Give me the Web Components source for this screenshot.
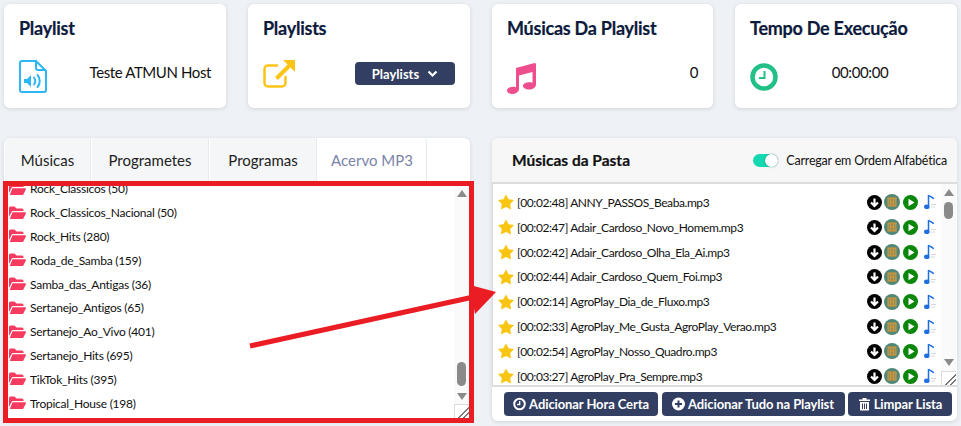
<!DOCTYPE html>
<html lang="pt">
<head>
<meta charset="utf-8">
<title>Playlist</title>
<style>
  html, body { margin: 0; height: 100%; }
  body { background: #eef1f5; font-family: Lato, "Noto Sans", sans-serif; overflow: hidden; }
</style>
</head>
<body>
<app-page>
  <stat-card slot="cards" heading="Playlist" place="end">
    <svg slot="icon" width="28" height="33" viewBox="0 0 28 33"><path d="M1 3a2 2 0 0 1 2-2h14l10 10v19a2 2 0 0 1-2 2H3a2 2 0 0 1-2-2z" fill="none" stroke="#2eb7f7" stroke-width="2"/><path d="M17 1v7a2 2 0 0 0 2 2h8" fill="none" stroke="#2eb7f7" stroke-width="2"/><path d="M5 19h3l4-4v12l-4-4H5z" fill="#2eb7f7"/><path d="M15 17.500c1.500 2 1.500 5 0 7M18.500 15c3 3.500 3 8.500 0 12" fill="none" stroke="#2eb7f7" stroke-width="2" stroke-linecap="round"/></svg>
    Teste ATMUN Host
  </stat-card>
  <stat-card slot="cards" heading="Playlists" place="end">
    <svg slot="icon" width="33" height="28" viewBox="0 0 33 28"><path d="M14 5.500H5a3.500 3.500 0 0 0-3.500 3.500v14A3.500 3.500 0 0 0 5 26.500h14a3.500 3.500 0 0 0 3.500-3.500v-6" fill="none" stroke="#fcc419" stroke-width="2.500" stroke-linecap="round"/><path d="M20 0h12v12z" fill="#fcc419"/><path d="M26.500 5.500 13.500 18.500" stroke="#fcc419" stroke-width="4"/></svg>
    <drop-button>Playlists</drop-button>
  </stat-card>
  <stat-card slot="cards" heading="Músicas Da Playlist" place="end">
    <svg slot="icon" width="29" height="31" viewBox="0 0 29 31" style="margin-top:3px"><path d="M9 5 27.500 0c.8 0 1.500.6 1.500 1.500v20c0 2.800-3 5-6.500 5s-6.500-1.600-6.500-3.600 3-3.600 6.500-3.600c1 0 2 .1 3 .4V9L12 12.500V26c0 2.800-3.500 5-6.500 5S0 29.400 0 27.400s3-3.700 6-3.700c1 0 2 .1 3 .5V6.500z" fill="#ef4e8e"/></svg>
    0
  </stat-card>
  <stat-card slot="cards" heading="Tempo De Execução" place="center">
    <svg slot="icon" width="28" height="28" viewBox="0 0 28 28" style="margin-top:3px"><circle cx="14" cy="14" r="11.500" fill="none" stroke="#22c087" stroke-width="4.500"/><path d="M14.500 8v7H9" fill="none" stroke="#22c087" stroke-width="2"/></svg>
    00:00:00
  </stat-card>

  <folder-panel slot="left">
    <folder-row>Rock_Classicos (50)</folder-row>
    <folder-row>Rock_Classicos_Nacional (50)</folder-row>
    <folder-row>Rock_Hits (280)</folder-row>
    <folder-row>Roda_de_Samba (159)</folder-row>
    <folder-row>Samba_das_Antigas (36)</folder-row>
    <folder-row>Sertanejo_Antigos (65)</folder-row>
    <folder-row>Sertanejo_Ao_Vivo (401)</folder-row>
    <folder-row>Sertanejo_Hits (695)</folder-row>
    <folder-row>TikTok_Hits (395)</folder-row>
    <folder-row>Tropical_House (198)</folder-row>
  </folder-panel>

  <songs-panel slot="right">
    <song-row>[00:02:48] ANNY_PASSOS_Beaba.mp3</song-row>
    <song-row>[00:02:47] Adair_Cardoso_Novo_Homem.mp3</song-row>
    <song-row>[00:02:42] Adair_Cardoso_Olha_Ela_Ai.mp3</song-row>
    <song-row>[00:02:44] Adair_Cardoso_Quem_Foi.mp3</song-row>
    <song-row>[00:02:14] AgroPlay_Dia_de_Fluxo.mp3</song-row>
    <song-row>[00:02:33] AgroPlay_Me_Gusta_AgroPlay_Verao.mp3</song-row>
    <song-row>[00:02:54] AgroPlay_Nosso_Quadro.mp3</song-row>
    <song-row>[00:03:27] AgroPlay_Pra_Sempre.mp3</song-row>
    <action-button slot="actions" icon="clock">Adicionar Hora Certa</action-button>
    <action-button slot="actions" icon="plus">Adicionar Tudo na Playlist</action-button>
    <action-button slot="actions" icon="trash">Limpar Lista</action-button>
  </songs-panel>

  <red-callout slot="overlay"></red-callout>
</app-page>

<script>
const scrollbarParts = `
  <span class="up"></span>
  <span class="thumb"></span>
  <span class="down"></span>
`;
const scrollbarCss = `
  .bar { display: flex; flex-direction: column; align-items: center; width: 15px; flex: none; background: #fafafa; }
  .up, .down { flex: none; width: 0; height: 0; border-style: solid; border-color: transparent; border-width: 0 5px 7px; border-bottom-color: #8a8a8a; }
  .down { transform: rotate(180deg); }
  .thumb { width: 9px; background: #8a8a8a; border-radius: 5px; }
  .grip { width: 15px; height: 14px; flex: none; background: #fff; border: 1px solid #dcdcdc; border-width: 1px 0 0 1px; box-sizing: border-box;
    background-image: linear-gradient(135deg, transparent 58%, #777 58%, #777 64%, transparent 64%, transparent 76%, #777 76%, #777 82%, transparent 82%); }
`;

class AppPage extends HTMLElement {
  constructor() {
    super();
    this.attachShadow({ mode: "open" }).innerHTML = `
      <style>
        :host { display: block; position: relative; width: 961px; height: 426px; box-sizing: border-box; padding: 4px; }
        .cards { display: grid; grid-template-columns: 222px 222px 221px 222px; column-gap: 22px; height: 104px; margin-bottom: 30px; }
        .panels { display: grid; grid-template-columns: 466px 465px; column-gap: 22px; height: 283px; }
      </style>
      <div class="cards"><slot name="cards"></slot></div>
      <div class="panels"><slot name="left"></slot><slot name="right"></slot></div>
      <slot name="overlay"></slot>
    `;
  }
}

class StatCard extends HTMLElement {
  constructor() {
    super();
    const place = this.getAttribute("place") == "center" ? "center" : "flex-end";
    this.attachShadow({ mode: "open" }).innerHTML = `
      <style>
        :host { display: block; background: #fff; border-radius: 6px; box-shadow: 0 1px 4px rgba(60,70,90,.16); padding: 0 15px; color: #111; font-size: 15px; letter-spacing: -.4px; }
        h3 { margin: 0; padding-top: 12px; height: 34px; font-size: 18px; line-height: 24px; font-weight: 700; letter-spacing: -.25px; -webkit-text-stroke: .2px #0c1a3c; color: #0c1a3c; }
        .row { display: flex; align-items: flex-start; height: 40px; margin-top: 10px; }
        .icon { flex: none; display: flex; }
        .value { flex: 1; display: flex; justify-content: ${place}; align-items: center; height: 24px; }
        ::slotted(svg) { display: block; }
      </style>
      <h3>${this.getAttribute("heading")}</h3>
      <div class="row">
        <div class="icon"><slot name="icon"></slot></div>
        <div class="value"><slot></slot></div>
      </div>
    `;
  }
}

class DropButton extends HTMLElement {
  constructor() {
    super();
    this.attachShadow({ mode: "open" }).innerHTML = `
      <style>
        :host { display: flex; align-items: center; justify-content: center; gap: 8px; width: 100px; height: 23px; margin-top: 3px; background: #323f62; color: #fff; border-radius: 4px; font-size: 13px; font-weight: 700; letter-spacing: 0; }
      </style>
      <slot></slot>
      <svg width="11" height="8" viewBox="0 0 11 8"><path d="M1.500 1.500 5.500 5.500 9.500 1.500" fill="none" stroke="#fff" stroke-width="2.200"/></svg>
    `;
  }
}

class FolderPanel extends HTMLElement {
  constructor() {
    super();
    const tabs = ["Músicas", "Programetes", "Programas", "Acervo MP3"];
    this.attachShadow({ mode: "open" }).innerHTML = `
      <style>
        :host { display: flex; flex-direction: column; background: #fff; border-radius: 6px; box-shadow: 0 1px 4px rgba(60,70,90,.16); overflow: hidden; }
        .tabs { display: flex; height: 43px; flex: none; padding-left: 1px; gap: 1px; }
        .tab { display: flex; align-items: center; justify-content: center; background: #f5f6f8; border-right: 1px solid #e8eaee; font-size: 15px; color: #222; box-sizing: border-box; }
        .tab.on { background: #fff; color: #7b83a8; border-radius: 0 4px 0 0; }
        .body { flex: 1; display: flex; min-height: 0; padding: 5px 0 3px 0; }
        .list { flex: 1; overflow: hidden; padding-left: 5px; }
        .list-in { margin-top: -9px; }
        .side { display: flex; flex-direction: column; margin-right: 1px; }
        ${scrollbarCss}
        .bar { flex: 1; padding: 4px 0; box-sizing: border-box; min-height: 0; }
        .thumb { margin-top: auto; height: 24px; margin-bottom: 7px; }
      </style>
      <div class="tabs">
        ${tabs.map((t, i) => `<div class="tab ${i == 3 ? "on" : ""}" style="width:${[86, 117, 107, 109][i]}px">${t}</div>`).join("")}
      </div>
      <div class="body">
        <div class="list"><div class="list-in"><slot></slot></div></div>
        <div class="side"><div class="bar">${scrollbarParts}</div><div class="grip"></div></div>
      </div>
    `;
  }
}

class FolderRow extends HTMLElement {
  constructor() {
    super();
    this.attachShadow({ mode: "open" }).innerHTML = `
      <style>
        :host { display: flex; align-items: center; gap: 4px; height: 23.800px; font-size: 12px; letter-spacing: -.25px; color: #111; }
        svg { flex: none; }
      </style>
      <svg width="17" height="14" viewBox="0 0 17 14"><path d="M0 2a1.500 1.500 0 0 1 1.500-1.500h4L7.500 2.500H13A1.500 1.500 0 0 1 14.500 4v1H4.500c-1 0-1.700.5-2.100 1.300L0 11z" fill="#f73a60"/><path d="M3.500 6.200h12.700c.6 0 1 .6.700 1.200l-2.600 5c-.2.400-.7.600-1.200.6H0.800z" fill="#f73a60"/></svg>
      <slot></slot>
    `;
  }
}

class SongsPanel extends HTMLElement {
  constructor() {
    super();
    this.attachShadow({ mode: "open" }).innerHTML = `
      <style>
        :host { display: flex; flex-direction: column; background: #fff; border-radius: 6px; box-shadow: 0 1px 4px rgba(60,70,90,.16); overflow: hidden; }
        header { flex: none; display: flex; align-items: center; justify-content: space-between; height: 46px; box-sizing: border-box; padding: 0 10px 0 20px; background: #f7f7f8; border-bottom: 2px solid #dcdcdc; }
        h4 { margin: 0; font-size: 15.500px; font-weight: 700; -webkit-text-stroke: .2px #111; color: #111; }
        .toggle { display: flex; align-items: center; gap: 8px; font-size: 12.500px; letter-spacing: -.2px; color: #111; }
        .track { position: relative; width: 25px; height: 13px; border-radius: 7px; background: #14d8b0; }
        .knob { position: absolute; right: 0; top: 0; width: 13px; height: 13px; border-radius: 50%; background: #fff; box-shadow: 0 0 2px rgba(0,0,0,.4); }
        .body { height: 203px; flex: none; display: flex; border-left: 1px solid #dcdcdc; border-bottom: 2px solid #dcdcdc; box-sizing: border-box; }
        .list { flex: 1; overflow: hidden; padding: 6px 0 0 5px; }
        .side { display: flex; flex-direction: column; margin-right: 1px; }
        ${scrollbarCss}
        .bar { flex: 1; padding-top: 5px; }
        .thumb { height: 17px; margin-top: 6px; margin-bottom: auto; }
        .down { margin-bottom: 5px; }
        .actions { flex: 1; display: grid; grid-template-columns: 154px 183px 104px; column-gap: 3.500px; align-items: start; padding: 5px 0 0 12px; }
      </style>
      <header>
        <h4>Músicas da Pasta</h4>
        <label class="toggle"><span class="track"><span class="knob"></span></span>Carregar em Ordem Alfabética</label>
      </header>
      <div class="body">
        <div class="list"><slot></slot></div>
        <div class="side"><div class="bar">${scrollbarParts}</div><div class="grip"></div></div>
      </div>
      <div class="actions"><slot name="actions"></slot></div>
    `;
  }
}

class SongRow extends HTMLElement {
  constructor() {
    super();
    this.attachShadow({ mode: "open" }).innerHTML = `
      <style>
        :host { display: flex; align-items: center; height: 24.850px; font-size: 12px; letter-spacing: -.42px; color: #111; }
        .star { flex: none; margin-right: 3px; }
        .name { flex: 1; white-space: nowrap; }
        .tools { display: flex; align-items: center; flex: none; margin-right: 5px; }
        svg { display: block; }
      </style>
      <svg class="star" width="16" height="16" viewBox="0 0 16 15"><path d="M8 0l2.600 4.700 5.400.9-3.800 3.800.9 5.600L8 12.500l-5.100 2.500.9-5.600L0 5.600l5.400-.9z" fill="#f8c612"/></svg>
      <span class="name"><slot></slot></span>
      <span class="tools">
        <svg width="15" height="15" viewBox="0 0 15 15"><circle cx="7.500" cy="7.500" r="7.500" fill="#000"/><path d="M7.500 3.500v7M4 7.500l3.500 3.500L11 7.500" fill="none" stroke="#fff" stroke-width="2.200"/></svg>
        <svg style="margin-left:2px" width="16" height="16" viewBox="0 0 16 16"><circle cx="8" cy="8" r="8" fill="#4f8778"/><rect x="4" y="4" width="8" height="8" fill="#8a9160" stroke="#e8952c"/><path d="M6.500 4.500v7M9.500 4.500v7M6.500 8h3" stroke="#e8952c" stroke-width=".8"/></svg>
        <svg style="margin-left:3px" width="15" height="15" viewBox="0 0 15 15"><circle cx="7.500" cy="7.500" r="7.500" fill="#0a870a"/><path d="M5.500 3.800v7.400l6-3.700z" fill="#fff"/></svg>
        <svg style="margin-left:6px" width="12" height="16" viewBox="0 0 12 16"><path d="M4.500 1V12" stroke="#1e6fe0" stroke-width="1.500"/><ellipse cx="2.800" cy="12.800" rx="2.800" ry="2.300" fill="#1e6fe0"/><path d="M4.500 1c1 2 4.500 1.500 5 4" fill="none" stroke="#1e6fe0" stroke-width="1.500"/><path d="M7 10.500h5M7 13h4" stroke="#d8d8d8"/></svg>
      </span>
    `;
  }
}

const buttonIcons = {
  clock: `<circle cx="6.500" cy="7" r="5.300" fill="none" stroke="#fff" stroke-width="2"/><path d="M6.700 4v3.500H4" fill="none" stroke="#fff" stroke-width="1.300"/>`,
  plus: `<circle cx="6.500" cy="7" r="6.500" fill="#fff"/><path d="M6.500 3.500v7M3 7h7" stroke="#323f62" stroke-width="2"/>`,
  trash: `<path d="M1 2.500h11v1.500H1zM4.500 2.500V1h4v1.500M2 5h9v8.500H2z" fill="#fff"/><path d="M4.500 6.500v5.500M6.500 6.500v5.500M8.500 6.500v5.500" stroke="#323f62"/>`,
};

class ActionButton extends HTMLElement {
  constructor() {
    super();
    this.attachShadow({ mode: "open" }).innerHTML = `
      <style>
        :host { display: flex; align-items: center; justify-content: center; gap: 3px; height: 24px; background: #323f62; color: #fff; border-radius: 4px; font-size: 13px; font-weight: 700; letter-spacing: -.1px; white-space: nowrap; }
      </style>
      <svg width="13" height="14" viewBox="0 0 13 14">${buttonIcons[this.getAttribute("icon")]}</svg>
      <slot></slot>
    `;
  }
}

// marcacao vermelha por cima do print
class RedCallout extends HTMLElement {
  constructor() {
    super();
    this.attachShadow({ mode: "open" }).innerHTML = `
      <style>
        :host { position: absolute; inset: 0; display: block; pointer-events: none; }
        .box { position: absolute; left: 3px; top: 181px; width: 471px; height: 242px; box-sizing: border-box; border: 5px solid #ea1c24; }
        svg { position: absolute; left: 0; top: 0; }
      </style>
      <div class="box"></div>
      <svg width="961" height="426"><path d="M250 346 478 296" stroke="#ea1c24" stroke-width="5"/><path d="M496 292 470 285 475 314z" fill="#ea1c24"/></svg>
    `;
  }
}

customElements.define("app-page", AppPage);
customElements.define("stat-card", StatCard);
customElements.define("drop-button", DropButton);
customElements.define("folder-panel", FolderPanel);
customElements.define("folder-row", FolderRow);
customElements.define("songs-panel", SongsPanel);
customElements.define("song-row", SongRow);
customElements.define("action-button", ActionButton);
customElements.define("red-callout", RedCallout);
</script>
</body>
</html>
